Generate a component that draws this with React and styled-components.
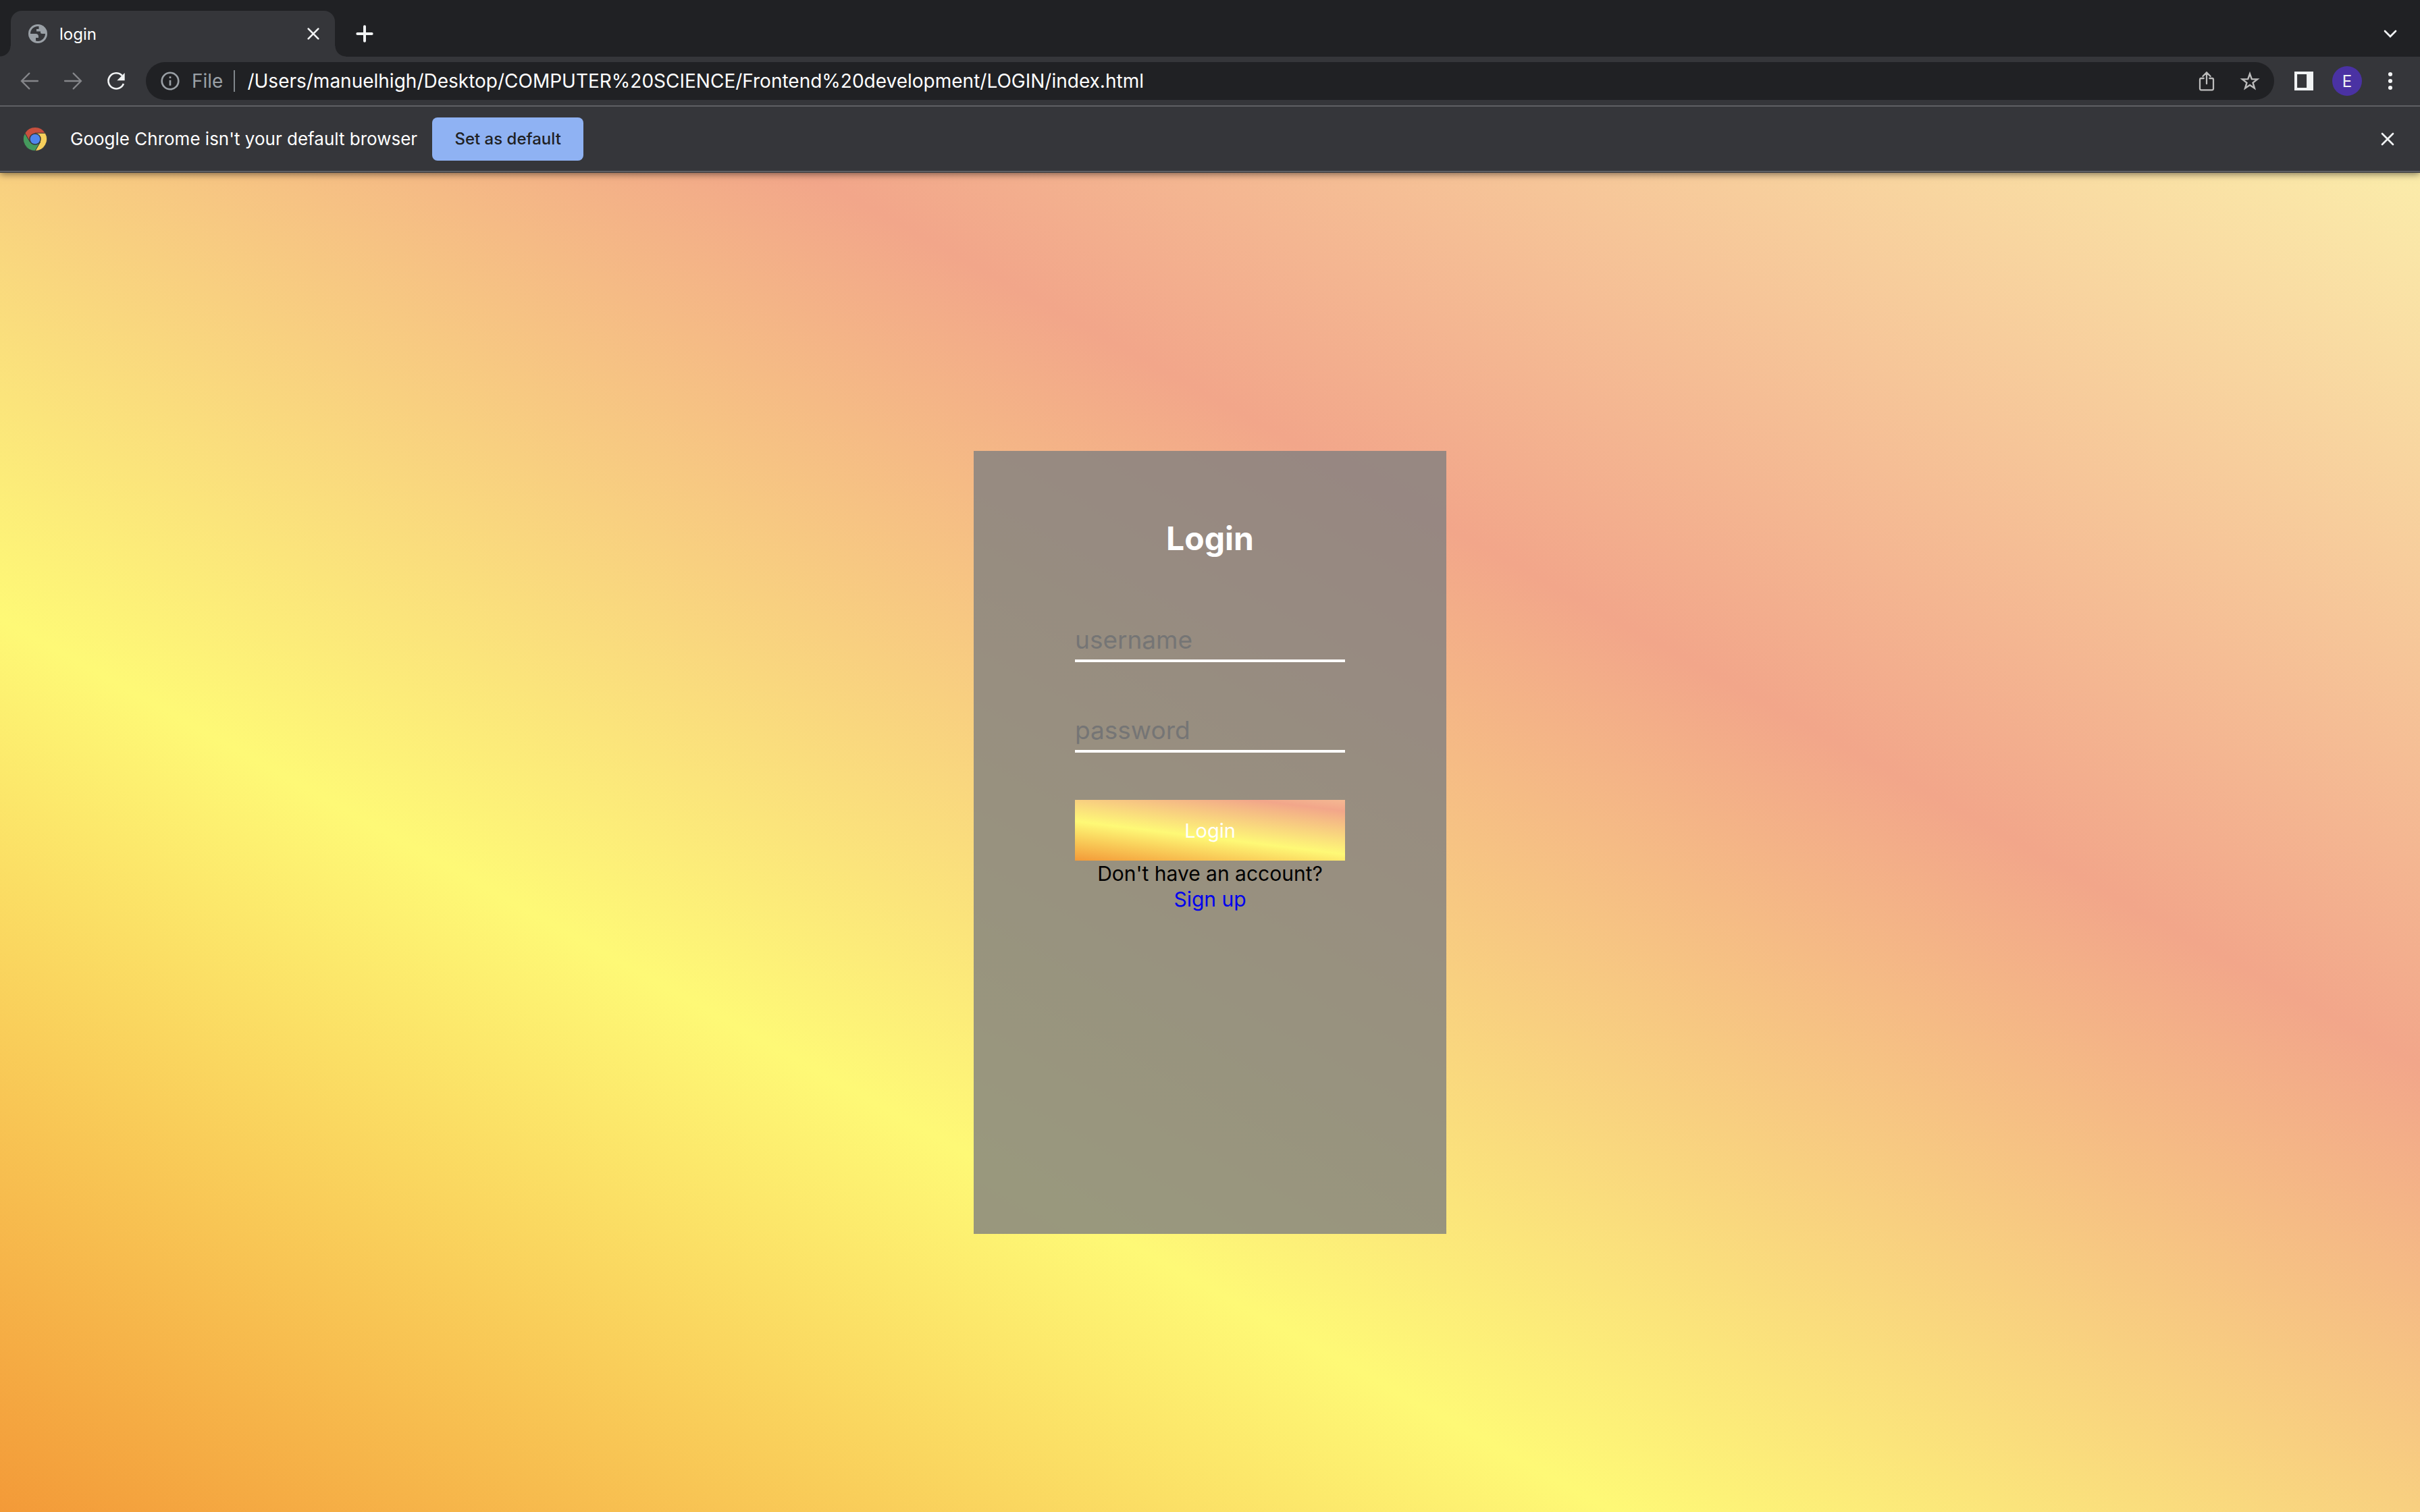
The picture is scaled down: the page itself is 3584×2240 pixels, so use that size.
import React from "react";
import styled, { createGlobalStyle } from "styled-components";

const colors = {
  orange: "#f39a38",
  yellow: "#fef976",
  salmon: "#f2a68a",
  cream: "#fbecaa",
};

const GlobalStyle = createGlobalStyle`
  * { box-sizing: border-box; }
  body { margin: 0; }
  button, input { font-family: inherit; }
  svg { display: block; flex: none; }
`;

const Window = styled.div`
  min-height: 100vh;
  display: flex;
  flex-direction: column;
  font-family: Inter, "Liberation Sans", sans-serif;
  color: #fff;
`;

const Chrome = styled.header`
  position: relative;
  padding-bottom: 1px;
  background: #35363a;
  box-shadow: 0 2px 10px rgba(0, 0, 0, 0.5);
`;

const TabStrip = styled.div`
  height: 84px;
  display: flex;
  align-items: flex-end;
  background: #202124;
  padding: 0 28px 0 16px;
`;

const Tab = styled.div`
  position: relative;
  display: flex;
  align-items: center;
  width: 480px;
  height: 68px;
  padding: 0 16px 0 26px;
  gap: 18px;
  background: #35363a;
  border-radius: 16px 16px 0 0;
  font-size: 24px;
  &::before,
  &::after {
    content: "";
    position: absolute;
    bottom: 0;
    width: 16px;
    height: 16px;
  }
  &::before {
    left: -16px;
    background: radial-gradient(circle at 0 0, #202124 15px, #35363a 16px);
  }
  &::after {
    right: -16px;
    background: radial-gradient(circle at 100% 0, #202124 15px, #35363a 16px);
  }
`;

const TabTitle = styled.span`
  flex: 1;
`;

const IconButton = styled.button`
  display: flex;
  align-items: center;
  justify-content: center;
  flex: none;
  width: ${(p) => p.$size || 64}px;
  height: ${(p) => p.$size || 64}px;
  padding: 0;
  border: 0;
  background: none;
  color: ${(p) => p.$color || "#f1f3f4"};
`;

const NewTab = styled(IconButton)`
  margin-left: 12px;
  height: 68px;
`;

const TabSearch = styled(IconButton)`
  margin-left: auto;
  width: 32px;
  height: 68px;
`;

const Toolbar = styled.div`
  height: 72px;
  display: flex;
  align-items: center;
  padding: 0 12px;
`;

const Omnibox = styled.div`
  flex: 1;
  display: flex;
  align-items: center;
  height: 56px;
  margin: 0 12px;
  padding: 0 4px 0 20px;
  border-radius: 28px;
  background: #202124;
  font-size: 28px;
`;

const Scheme = styled.span`
  margin: 0 16px;
  color: #9aa0a6;
`;

const Divider = styled.span`
  width: 2px;
  height: 32px;
  margin-right: 18px;
  background: #80868b;
`;

const Address = styled.input`
  flex: 1;
  min-width: 0;
  padding: 0;
  border: 0;
  outline: 0;
  background: none;
  color: #fff;
  font-size: 28px;
`;

const Avatar = styled.span`
  display: grid;
  place-items: center;
  width: 44px;
  height: 44px;
  border-radius: 50%;
  background: #4a32a3;
  font-size: 24px;
`;

const InfoBar = styled.div`
  height: 99px;
  display: flex;
  align-items: center;
  padding: 0 16px 0 32px;
  border-top: 2px solid #5f6064;
  border-bottom: 2px solid #5f6064;
  font-size: 26px;
`;

const InfoText = styled.span`
  margin: 0 22px 0 32px;
`;

const DefaultButton = styled.button`
  width: 224px;
  height: 64px;
  padding: 0;
  border: 0;
  border-radius: 8px;
  background: #8fb2f3;
  color: #202124;
  font-size: 24px;
  font-weight: 500;
`;

const Spacer = styled.span`
  flex: 1;
`;

const Page = styled.main`
  flex: 1;
  display: flex;
  align-items: center;
  justify-content: center;
  background: linear-gradient(
    to top right,
    ${colors.orange},
    ${colors.yellow},
    ${colors.salmon},
    ${colors.cream}
  );
`;

const Card = styled.form`
  width: 700px;
  min-height: 1160px;
  padding: 96px 150px;
  display: flex;
  flex-direction: column;
  background: rgba(128, 128, 128, 0.8);
  text-align: center;
`;

const Title = styled.h1`
  margin: 0 0 75px;
  font-size: 48px;
  line-height: 68px;
  font-weight: 700;
`;

const Field = styled.input`
  width: 100%;
  height: 74px;
  margin-bottom: 60px;
  padding: 10px 0 0;
  border: 0;
  border-bottom: 4px solid #fff;
  outline: 0;
  background: none;
  color: #fff;
  font-size: 37px;
  &::placeholder {
    color: #757575;
    opacity: 1;
  }
`;

const Submit = styled.button`
  height: 90px;
  margin-top: 10px;
  border: 0;
  background: linear-gradient(
    7deg,
    ${colors.orange} 0%,
    ${colors.yellow} 42%,
    ${colors.salmon} 88%,
    ${colors.cream} 134%
  );
  color: #fff;
  font-size: 29px;
`;

const Prompt = styled.p`
  margin: 0;
  color: #000;
  font-size: 30px;
  line-height: 38px;
`;

const SignUp = styled.a`
  display: block;
  color: #0000ee;
  text-decoration: none;
`;

const Svg = ({ size, children }) => (
  <svg width={size} height={size} viewBox="0 0 24 24" fill="none" stroke="currentColor" strokeWidth="2" aria-hidden="true">
    {children}
  </svg>
);

const Globe = () => (
  <svg width="28" height="28" viewBox="0 0 28 28" aria-hidden="true">
    <circle cx="14" cy="14" r="14" fill="#9aa0a6" />
    <path d="M14 3C7.500 3 3 8 3 14h8c2.500 0 4 1.500 4 4v2h-4v4.500c1 .3 2 .5 3 .5 6 0 11-5 11-11h-4.500c-2 0-2.500-1-2.500-2v-1.500h-6V7h3.500V3z" fill="#35363a" />
  </svg>
);

const ChromeLogo = () => (
  <svg width="40" height="40" viewBox="0 0 48 48" aria-hidden="true">
    <g stroke="#35363a" strokeWidth="1">
      <path d="M5.810 13.500A21 21 0 0 1 42.190 13.500H24V24L14.910 29.250z" fill="#c8503e" />
      <path d="M42.190 13.500A21 21 0 0 1 24 45L33.090 29.250 24 24V13.500z" fill="#f7cf5b" />
      <path d="M24 45A21 21 0 0 1 5.810 13.500L14.910 29.250 24 24 33.090 29.250z" fill="#459a5d" />
    </g>
    <circle cx="24" cy="24" r="10.500" fill="#35363a" />
    <circle cx="24" cy="24" r="8.800" fill="#4f86ec" />
  </svg>
);

export default function App() {
  return (
    <Window>
      <GlobalStyle />
      <Chrome>
        <TabStrip>
          <Tab>
            <Globe />
            <TabTitle>login</TabTitle>
            <IconButton $size={32} aria-label="Close tab">
              <Svg size={32}><path d="M6.500 6.500l11 11m0-11l-11 11" strokeLinecap="round" /></Svg>
            </IconButton>
          </Tab>
          <NewTab aria-label="New tab">
            <Svg size={32}><path d="M12 4v16M4 12h16" strokeWidth="3" strokeLinecap="round" /></Svg>
          </NewTab>
          <TabSearch aria-label="Search tabs">
            <Svg size={32}><path d="M6 9l6 6 6-6" strokeLinecap="round" /></Svg>
          </TabSearch>
        </TabStrip>
        <Toolbar>
          <IconButton aria-label="Back" $color="#85868a">
            <Svg size={32}><path d="M21 12H3.500m8-8.500L3 12l8.500 8.500" strokeWidth="1.700" strokeLinecap="round" /></Svg>
          </IconButton>
          <IconButton aria-label="Forward" $color="#85868a">
            <Svg size={32}><path d="M3 12h17.500m-8-8.500L21 12l-8.500 8.500" strokeWidth="1.700" strokeLinecap="round" /></Svg>
          </IconButton>
          <IconButton aria-label="Reload">
            <Svg size={32}>
              <path d="M20.200 15A8.700 8.700 0 1 1 18.500 6" />
              <path d="M21.500 3v8.500H13z" fill="currentColor" stroke="none" />
            </Svg>
          </IconButton>
          <Omnibox>
            <Svg size={32}>
              <g color="#9aa0a6">
                <circle cx="12" cy="12" r="9.200" stroke="currentColor" />
                <path d="M12 11v6M12 7v2" stroke="currentColor" />
              </g>
            </Svg>
            <Scheme>File</Scheme>
            <Divider />
            <Address
              aria-label="Address"
              defaultValue="/Users/manuelhigh/Desktop/COMPUTER%20SCIENCE/Frontend%20development/LOGIN/index.html"
            />
            <IconButton aria-label="Share" $color="#bdbdbd">
              <Svg size={32}>
                <path
                  d="M8.800 9H6a1.500 1.500 0 0 0-1.500 1.500V20.500A1.500 1.500 0 0 0 6 22h12a1.500 1.500 0 0 0 1.500-1.500V10.500A1.500 1.500 0 0 0 18 9h-2.800M12 15V3M7.800 6.800L12 2.600l4.200 4.200"
                  strokeWidth="1.700"
                  strokeLinecap="round"
                />
              </Svg>
            </IconButton>
            <IconButton aria-label="Bookmark" $color="#bdbdbd">
              <Svg size={32}>
                <path
                  d="M12 4l2.100 5.900 6.300.2-5 3.900 1.800 6L12 16.500 6.800 20l1.800-6-5-3.900 6.300-.2z"
                  strokeWidth="1.800"
                />
              </Svg>
            </IconButton>
          </Omnibox>
          <IconButton aria-label="Side panel">
            <Svg size={28}>
              <path d="M0 0h24v24H0zM3.500 3.500v17h12v-17z" fill="currentColor" fillRule="evenodd" stroke="none" />
            </Svg>
          </IconButton>
          <IconButton aria-label="Profile">
            <Avatar>E</Avatar>
          </IconButton>
          <IconButton aria-label="Menu">
            <Svg size={32}>
              <g fill="currentColor" stroke="none">
                <circle cx="12" cy="4.500" r="2.300" />
                <circle cx="12" cy="12" r="2.300" />
                <circle cx="12" cy="19.500" r="2.300" />
              </g>
            </Svg>
          </IconButton>
        </Toolbar>
        <InfoBar>
          <ChromeLogo />
          <InfoText>Google Chrome isn't your default browser</InfoText>
          <DefaultButton>Set as default</DefaultButton>
          <Spacer />
          <IconButton aria-label="Dismiss">
            <Svg size={32}><path d="M6 6l12 12M18 6L6 18" strokeLinecap="round" /></Svg>
          </IconButton>
        </InfoBar>
      </Chrome>
      <Page>
        <Card onSubmit={(e) => e.preventDefault()}>
          <Title>Login</Title>
          <Field type="text" placeholder="username" aria-label="username" />
          <Field type="password" placeholder="password" aria-label="password" />
          <Submit type="submit">Login</Submit>
          <Prompt>
            Don't have an account? <SignUp href="#">Sign up</SignUp>
          </Prompt>
        </Card>
      </Page>
    </Window>
  );
}
